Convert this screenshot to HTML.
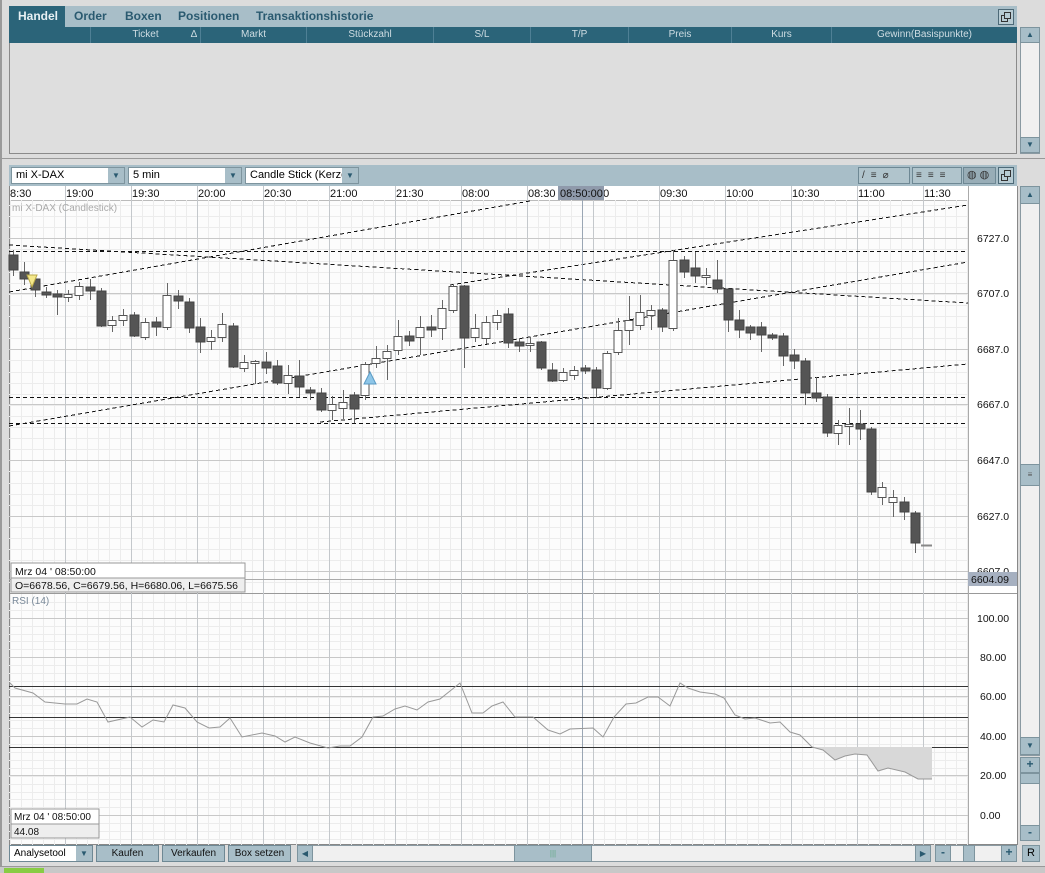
<!DOCTYPE html>
<html><head><meta charset="utf-8"><style>
*{margin:0;padding:0;box-sizing:border-box}
body{width:1045px;height:873px;background:#dcdcdc;font-family:"Liberation Sans",sans-serif;position:relative;overflow:hidden}
.abs{position:absolute}
.tab{position:absolute;top:6px;height:21px;font-weight:bold;font-size:12px;color:#2a5a70;line-height:21px}
.col{position:absolute;top:27px;height:16px;font-size:10px;color:#cfdde3;line-height:16px;text-align:center;border-right:1px solid #4f8095}
.btn{position:absolute;top:845px;height:17px;background:#a8bec8;border:1px solid #6e8894;font-size:10px;line-height:15px;text-align:center;color:#111}
.sb{position:absolute;background:#a8bec8;border:1px solid #7d949e}
</style></head><body>
<!-- top panel -->
<div class="abs" style="left:9px;top:6px;width:1008px;height:21px;background:#a8bec8"></div>
<div class="abs" style="left:9px;top:6px;width:56px;height:21px;background:#2b6479"></div>
<div class="tab" style="left:18px;color:#e8f0f3">Handel</div>
<div class="tab" style="left:74px">Order</div>
<div class="tab" style="left:125px">Boxen</div>
<div class="tab" style="left:178px">Positionen</div>
<div class="tab" style="left:256px">Transaktionshistorie</div>
<div class="abs" style="left:998px;top:9px;width:16px;height:16px;border:1px solid #4d6a78;background:#b8ccd4"><div class="abs" style="left:2px;top:5px;width:7px;height:7px;border:1px solid #333"></div><div class="abs" style="left:5px;top:2px;width:7px;height:7px;border:1px solid #333;background:#b8ccd4"></div></div>
<div class="abs" style="left:9px;top:27px;width:1008px;height:16px;background:#2b6479"></div>
<div class="col" style="left:9px;width:82px"></div>
<div class="col" style="left:91px;width:110px">Ticket<span style="position:absolute;right:3px">∆</span></div>
<div class="col" style="left:201px;width:106px">Markt</div>
<div class="col" style="left:307px;width:127px">Stückzahl</div>
<div class="col" style="left:434px;width:97px">S/L</div>
<div class="col" style="left:531px;width:98px">T/P</div>
<div class="col" style="left:629px;width:103px">Preis</div>
<div class="col" style="left:732px;width:100px">Kurs</div>
<div class="col" style="left:832px;width:185px;border:none">Gewinn(Basispunkte)</div>
<div class="abs" style="left:9px;top:43px;width:1008px;height:111px;background:#dedede;border:1px solid #8a8a8a;border-top:none"></div>
<div class="abs" style="left:1020px;top:27px;width:20px;height:127px;background:#f0f0f0;border:1px solid #8a9aa2"></div>
<div class="sb" style="left:1020px;top:27px;width:20px;height:16px;font-size:8px;text-align:center;line-height:14px;color:#2a5a70">▲</div>
<div class="sb" style="left:1020px;top:137px;width:20px;height:16px;font-size:8px;text-align:center;line-height:14px;color:#2a5a70">▼</div>
<div class="abs" style="left:0;top:158px;width:1045px;height:1px;background:#999"></div>
<div class="abs" style="left:0;top:0;width:2px;height:873px;background:#9a9a9a"></div>
<!-- chart toolbar -->
<div class="abs" style="left:9px;top:165px;width:1008px;height:21px;background:#a8bec8"></div>
<div class="abs" style="left:11px;top:167px;width:114px;height:17px;background:#fff;border:1px solid #7d949e;font-size:11px;line-height:15px;padding-left:4px">mi X-DAX<div class="abs" style="right:0;top:0;width:16px;height:15px;background:#a8bec8;font-size:8px;text-align:center;color:#2a5a70">▼</div></div>
<div class="abs" style="left:128px;top:167px;width:114px;height:17px;background:#fff;border:1px solid #7d949e;font-size:11px;line-height:15px;padding-left:4px">5 min<div class="abs" style="right:0;top:0;width:16px;height:15px;background:#a8bec8;font-size:8px;text-align:center;color:#2a5a70">▼</div></div>
<div class="abs" style="left:245px;top:167px;width:114px;height:17px;background:#fff;border:1px solid #7d949e;font-size:11px;line-height:15px;padding-left:4px;overflow:hidden;white-space:nowrap">Candle Stick (Kerze<div class="abs" style="right:0;top:0;width:16px;height:15px;background:#a8bec8;font-size:8px;text-align:center;color:#2a5a70">▼</div></div>
<div class="abs" style="left:858px;top:167px;width:52px;height:17px;border:1px solid #6e8894;background:#b0c4cc;font-size:10px;line-height:15px;letter-spacing:6px;padding-left:3px;color:#333">/≡⌀</div>
<div class="abs" style="left:912px;top:167px;width:50px;height:17px;border:1px solid #6e8894;background:#b0c4cc;font-size:10px;line-height:15px;letter-spacing:6px;padding-left:3px;color:#333">≡≡≡</div>
<div class="abs" style="left:963px;top:167px;width:33px;height:17px;border:1px solid #6e8894;background:#98adb7;font-size:11px;line-height:15px;letter-spacing:3px;padding-left:3px;color:#333">◍◍</div>
<div class="abs" style="left:998px;top:167px;width:16px;height:17px;border:1px solid #4d6a78;background:#b8ccd4"><div class="abs" style="left:2px;top:6px;width:7px;height:7px;border:1px solid #333"></div><div class="abs" style="left:5px;top:2px;width:7px;height:7px;border:1px solid #333;background:#b8ccd4"></div></div>
<!-- right scrollbar -->
<div class="abs" style="left:1020px;top:186px;width:20px;height:570px;background:#f0f0f0;border:1px solid #8a9aa2"></div>
<div class="sb" style="left:1020px;top:186px;width:20px;height:18px;font-size:8px;text-align:center;line-height:16px;color:#2a5a70">▲</div>
<div class="sb" style="left:1020px;top:464px;width:20px;height:22px;text-align:center;font-size:8px;line-height:20px;color:#555">≡</div>
<div class="sb" style="left:1020px;top:737px;width:20px;height:18px;font-size:8px;text-align:center;line-height:16px;color:#2a5a70">▼</div>
<div class="abs" style="left:1020px;top:757px;width:20px;height:84px;background:#f0f0f0;border:1px solid #8a9aa2"></div>
<div class="sb" style="left:1020px;top:757px;width:20px;height:16px;font-weight:bold;font-size:12px;text-align:center;line-height:13px;color:#2a5a70">+</div>
<div class="sb" style="left:1020px;top:773px;width:20px;height:11px"></div>
<div class="sb" style="left:1020px;top:825px;width:20px;height:16px;font-weight:bold;font-size:12px;text-align:center;line-height:13px;color:#2a5a70">-</div>
<!-- chart svg -->
<svg class="abs" style="left:0;top:0" width="1045" height="873" id="s" font-family="Liberation Sans, sans-serif"></svg>
<!-- bottom -->
<div class="abs" style="left:9px;top:845px;width:84px;height:17px;background:#fff;border:1px solid #6e8894;font-size:10px;line-height:15px;padding-left:4px">Analysetool<div class="abs" style="right:0;top:0;width:16px;height:15px;background:#a8bec8;font-size:8px;text-align:center;color:#2a5a70">▼</div></div>
<div class="btn" style="left:96px;width:63px">Kaufen</div>
<div class="btn" style="left:162px;width:63px">Verkaufen</div>
<div class="btn" style="left:228px;width:63px">Box setzen</div>
<div class="abs" style="left:297px;top:845px;width:634px;height:17px;background:#f0f0f0;border:1px solid #8a9aa2"></div>
<div class="sb" style="left:297px;top:845px;width:16px;height:17px;font-size:8px;text-align:center;line-height:15px;color:#2a5a70">◀</div>
<div class="sb" style="left:514px;top:845px;width:78px;height:17px;font-size:8px;text-align:center;line-height:15px;color:#6a8">|||</div>
<div class="sb" style="left:915px;top:845px;width:16px;height:17px;font-size:8px;text-align:center;line-height:15px;color:#2a5a70">▶</div>
<div class="abs" style="left:935px;top:845px;width:82px;height:17px;background:#f0f0f0;border:1px solid #8a9aa2"></div>
<div class="sb" style="left:935px;top:845px;width:16px;height:17px;font-weight:bold;font-size:12px;text-align:center;line-height:13px;color:#2a5a70">-</div>
<div class="sb" style="left:963px;top:845px;width:12px;height:17px"></div>
<div class="sb" style="left:1001px;top:845px;width:16px;height:17px;font-weight:bold;font-size:12px;text-align:center;line-height:13px;color:#2a5a70">+</div>
<div class="sb" style="left:1022px;top:845px;width:18px;height:17px;font-size:11px;text-align:center;line-height:15px">R</div>
<div class="abs" style="left:0;top:866px;width:1045px;height:7px;background:#c8c8c8;border-top:1px solid #999"></div>
<div class="abs" style="left:4px;top:868px;width:40px;height:5px;background:#8c4"></div>
<script>
var s=document.getElementById('s'),h='';
function L(x1,y1,x2,y2,c,w,d){h+='<line x1="'+x1+'" y1="'+y1+'" x2="'+x2+'" y2="'+y2+'" stroke="'+c+'" stroke-width="'+(w||1)+'"'+(d?' stroke-dasharray="'+d+'"':'')+' shape-rendering="crispEdges"/>';}
function R(x,y,w,hh,f,st){h+='<rect x="'+x+'" y="'+y+'" width="'+w+'" height="'+hh+'" fill="'+f+'"'+(st?' stroke="'+st+'"':'')+' shape-rendering="crispEdges"/>';}
function T(x,y,t,sz,c,a){h+='<text x="'+x+'" y="'+y+'" font-size="'+(sz||11)+'" fill="'+(c||'#111')+'"'+(a?' text-anchor="'+a+'"':'')+'>'+t+'</text>';}
// areas
R(9,186,1008,14,'#fff');R(9,200,959,393,'#fcfcfc');R(968,200,49,393,'#fff');
R(9,593,959,252,'#fcfcfc');R(968,593,49,252,'#fff');
L(9,593.5,1017,593.5,'#999');L(968.5,186,968.5,845,'#aaa');L(9,200.5,968,200.5,'#bbb');L(1017.5,186,1017.5,845,'#888');L(9.5,186,9.5,845,'#888');L(9,844.5,1017,844.5,'#888');
// minor grid
for(var x=10;x<968;x+=11){L(x+.5,200,x+.5,593,'#ececec');L(x+.5,594,x+.5,845,'#ececec');}
for(var y=205;y<593;y+=11.1)L(9,Math.round(y)+.5,968,Math.round(y)+.5,'#ececec');
for(var y=602;y<845;y+=7.9)L(9,Math.round(y)+.5,968,Math.round(y)+.5,'#ececec');
// major
var mj=[65,131,197,263,329,395,461,527,593,659,725,791,857,923];
mj.forEach(function(x){L(x+.5,186,x+.5,845,'#c4c8cc');});
[238,293,349,404,460,516,571].forEach(function(y){L(9,y+.5,968,y+.5,'#c8c8c8');});
[618,657,696,736,775,815].forEach(function(y){L(9,y+.5,968,y+.5,'#c8c8c8');});
// time labels
var tl=[[10,'8:30'],[66,'19:00'],[132,'19:30'],[198,'20:00'],[264,'20:30'],[330,'21:00'],[396,'21:30'],[462,'08:00'],[528,'08:30'],[594,':00'],[660,'09:30'],[726,'10:00'],[792,'10:30'],[858,'11:00'],[924,'11:30']];
tl.forEach(function(t){T(t[0],197,t[1],11);});
R(558,186,46,14,'#8f9aab');T(560,197,'08:50:00',11,'#111');
// price labels
[[238,'6727.0'],[293,'6707.0'],[349,'6687.0'],[404,'6667.0'],[460,'6647.0'],[516,'6627.0'],[571,'6607.0']].forEach(function(p){T(977,p[0]+4,p[1],10.5);});
[[618,'100.00'],[657,'80.00'],[696,'60.00'],[736,'40.00'],[775,'20.00'],[815,'0.00']].forEach(function(p){T(p[1].length>5?977:980,p[0]+4,p[1],10.5);});
T(12,211,'mi X-DAX (Candlestick)',10,'#aaa');
// dashed lines
var D='4,3';
L(9,251.5,968,251.5,'#111',1,D);L(9,397.5,968,397.5,'#111',1,D);L(9,423.5,968,423.5,'#111',1,D);
L(9,245,968,303,'#111',1,D);L(9,292,530,201,'#111',1,D);L(450,285,968,205,'#111',1,D);
L(9,426,968,262,'#111',1,D);L(320,422,968,364,'#111',1,D);
// cursor
L(582.5,200,582.5,845,'#9aa6b4');
// candles
var c=[[13,1,255,270,250,276],[24,1,272,279,262,285],[35,1,279,290,275,297],[46,1,292,295,287,298],[57,1,294,297,290,315],[68,0,294,297,290,302],[79,0,286,295,282,300],[90,1,287,291,279,300],[101,1,291,326,288,327],[112,0,320,325,316,332],[123,0,315,320,309,326],[134,1,315,336,312,337],[145,0,322,337,318,340],[156,1,322,327,317,336],[167,0,295,327,283,330],[178,1,296,301,290,309],[189,1,302,328,298,333],[200,1,327,342,318,353],[211,0,337,341,330,350],[222,0,324,337,313,342],[233,1,326,367,323,368],[244,0,362,368,355,372],[255,0,361,362,360,384],[266,1,362,368,352,374],[277,1,366,383,360,385],[288,0,375,383,365,394],[299,1,376,387,360,397],[310,1,390,393,387,400],[321,1,393,410,388,412],[332,0,404,410,396,420],[343,0,402,408,390,419],[354,1,395,409,392,423],[365,0,364,395,362,400],[376,0,358,363,346,368],[387,0,351,358,345,380],[398,0,336,350,320,355],[409,1,336,341,331,346],[420,0,327,337,316,355],[431,1,327,330,315,337],[442,0,308,328,300,340],[453,0,286,310,284,313],[464,1,286,338,285,368],[475,0,328,337,314,342],[486,0,322,338,316,344],[497,0,315,322,310,330],[508,1,314,343,308,348],[519,1,342,346,338,352],[530,0,343,344,337,352],[541,1,342,368,341,370],[552,1,370,381,363,382],[563,0,372,380,368,382],[574,0,370,375,366,380],[585,1,368,371,365,374],[596,1,370,388,367,398],[607,0,353,388,351,390],[618,0,330,352,318,355],[629,0,320,330,296,345],[640,0,312,325,295,330],[651,0,310,315,305,330],[662,1,310,327,308,332],[673,0,260,328,250,331],[684,1,260,272,256,278],[695,1,268,276,252,283],[706,0,275,276,268,285],[717,1,280,289,260,293],[728,1,289,320,288,332],[739,1,320,330,310,338],[750,1,327,333,325,340],[761,1,327,335,322,352],[772,1,335,338,333,340],[783,1,336,356,333,366],[794,1,355,361,349,369],[805,1,361,393,358,405],[816,1,393,398,377,402],[827,1,397,433,394,437],[838,0,425,433,420,445],[849,0,424,426,408,445],[860,1,424,429,410,440],[871,1,429,492,427,495],[882,0,487,497,482,505],[893,0,497,502,490,517],[904,1,502,512,497,520],[915,1,513,543,511,553]];
c.forEach(function(k){var x=k[0];L(x+.5,k[4],x+.5,k[5],'#666');if(k[1])R(x-4,k[2],9,Math.max(k[3]-k[2],2),'#555','#444');else R(x-4.5+.5,k[2]+.5,8,Math.max(k[3]-k[2],2),'#fff','#555');});
L(921,545.5,932,545.5,'#888',2);
// markers
h+='<polygon points="27,275 37,275 32,287" fill="#f4e88a" stroke="#b9a94a"/>';
h+='<polygon points="364,384 376,384 370,372" fill="#8ec6e8" stroke="#5a9ac4"/>';
// price line / box
L(9,579.5,968,579.5,'#aaa');R(968,572,49,14,'#a6b0c0');T(971,583,'6604.09',10.5);
R(11,563,234,15,'#fff','#999');R(11,578,234,14,'#eee','#999');
T(15,575,'Mrz 04 \' 08:50:00',10.5);T(15,589,'O=6678.56, C=6679.56, H=6680.06, L=6675.56',10.5);
T(12,604,'RSI (14)',10,'#7a8a9a');
// RSI levels
L(9,686.5,968,686.5,'#333');L(9,717.5,968,717.5,'#333');L(9,747.5,968,747.5,'#333');
var r=[[10,683],[15,688],[33,693],[45,702],[65,704],[77,704],[87,699],[97,702],[108,722],[130,717],[142,727],[153,720],[164,722],[173,705],[185,708],[197,722],[209,728],[220,727],[230,718],[242,737],[262,733],[275,736],[285,742],[295,737],[310,743],[328,748],[340,746],[350,746],[362,737],[373,717],[383,716],[395,709],[405,706],[417,710],[428,702],[440,699],[460,683],[472,713],[483,713],[492,706],[503,702],[515,717],[533,717],[548,730],[560,734],[570,729],[593,728],[603,737],[614,717],[626,704],[636,703],[648,697],[658,697],[670,706],[680,683],[688,688],[700,692],[715,694],[724,698],[735,715],[745,719],[755,718],[770,723],[780,722],[790,732],[800,735],[812,747],[823,750],[835,760],[845,756],[855,754],[867,755],[878,771],[888,768],[905,772],[918,779],[932,779]];
var fp='812,747 ';r.forEach(function(p){if(p[0]>812)fp+=p[0]+','+p[1]+' ';});fp+='932,747';
h+='<polygon points="'+fp+'" fill="#d8d8d8"/>';
h+='<polyline points="'+r.map(function(p){return p.join(',')}).join(' ')+'" fill="none" stroke="#999" stroke-width="1"/>';
R(11,809,88,15,'#fff','#999');R(11,824,88,14,'#eee','#999');
T(14,820,'Mrz 04 \' 08:50:00',10);T(14,835,'44.08',10);
s.innerHTML=h;
</script>
</body></html>
